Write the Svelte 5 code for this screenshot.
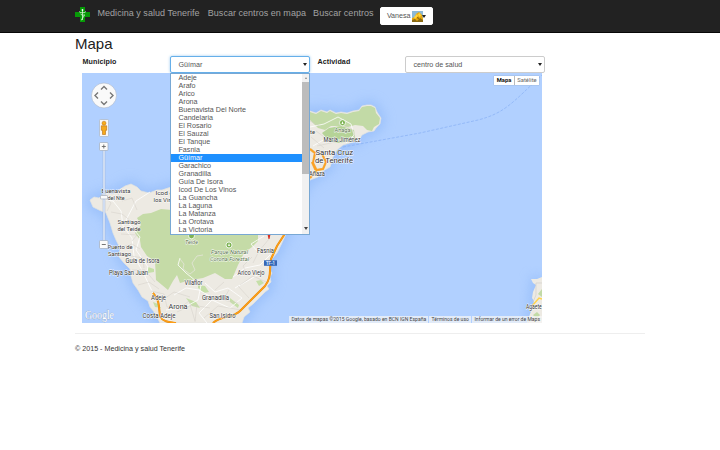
<script>
  const links = [
    { text: 'Medicina y salud Tenerife', width: 103 },
    { text: 'Buscar centros en mapa', width: 98 },
    { text: 'Buscar centros', width: 60 }
  ];
  const towns = ['Adeje', 'Arafo', 'Arico', 'Arona', 'Buenavista Del Norte', 'Candelaria', 'El Rosario', 'El Sauzal', 'El Tanque', 'Fasnia', 'Güímar', 'Garachico', 'Granadilla', 'Guía De Isora', 'Icod De Los Vinos', 'La Guancha', 'La Laguna', 'La Matanza', 'La Orotava', 'La Victoria'];
  const selected = 'Güímar';
  // label, x, baseline, width, size
  const places = [
    ['Buenavista', 101.5, 193, 29, 6.2], ['del Nte', 107.5, 199.5, 17, 6.2],
    ['Icod de', 155.5, 195, 21, 6.2], ['los Vinos', 153.5, 201.5, 25, 6.2],
    ['Santiago', 117.5, 224.2, 23, 6.2], ['del Teide', 117.5, 230.7, 23, 6.2],
    ['Puerto de', 107.5, 249.3, 25, 6.2], ['Santiago', 108, 255.7, 23, 6.2],
    ['Guía de Isora', 125.5, 263, 34, 6.5], ['Playa San Juan', 109, 275, 39, 6.5],
    ['Vilaflor', 184.5, 284.5, 18, 6.5], ['Adeje', 151, 299.8, 15, 6.5],
    ['Arona', 168.5, 309, 19, 7.4], ['Costa Adeje', 142.5, 318.3, 33, 6.5],
    ['Granadilla', 202, 299.7, 27, 6.8], ['San Isidro', 209.5, 317.7, 26, 6.6],
    ['Arico Viejo', 237.5, 274.7, 27, 6.5], ['Fasnia', 257, 252.5, 17, 6.5],
    ['María Jiménez', 323.5, 141.7, 37, 6.5], ['Añaza', 309, 175.5, 16, 6.5],
    ['Santa Cruz', 315.5, 155.1, 37.5, 8], ['de Tenerife', 315, 163, 38, 8],
    ['Tegueste', 291, 134, 24, 6.2], ['Agaete', 526, 308.7, 15.7, 6.4]
  ];
</script>

<div class="page">
  <header>
    <nav class="container">
      <svg class="logo" width="15" height="15" viewBox="0 0 15 15">
        <path d="M5 0h5v5h5v5h-5v5H5v-5H0V5h5z" fill="#079a07" />
        <path d="M7.500 3v10M4 4.500q2 2 3.500 1 1.500 1 3.500-1M5.500 7q2 2 3.500 1t-1 2.500-1 2" fill="none" stroke="#d5f5d5" stroke-width=".8" />
        <circle cx="7.500" cy="3" r=".9" fill="#fff" />
      </svg>
      {#each links as link}
        <a href="#top" style:width="{link.width}px">{link.text}</a>
      {/each}
      <button class="user">
        <span>Vanesa</span>
        <svg width="11" height="11" viewBox="0 0 11 11">
          <rect width="11" height="11" fill="#8cb9d8" />
          <path d="M0 11V7l3-1 1-3 3-2 3 3 1 4v3z" fill="#e8a90e" />
          <path d="M2 6l3-3 1 2-3 3zm4-3 2-1 1 3-2 1z" fill="#ffd43d" />
          <path d="M0 9l3-1 2 2 3-3 3 2v2H0z" fill="#8a6a14" />
          <path d="M5 6l2 1-1 1zM1 8l2-1" fill="#553d0c" />
        </svg>
        <i class="caret"></i>
      </button>
    </nav>
  </header>

  <main class="container">
    <h1>Mapa</h1>
    <div class="filters">
      <b class="first">Municipio</b>
      <div class="select active">
        <span>{selected}</span><i class="caret"></i>
        <div class="menu">
          <ul>
            {#each towns as town}
              <li class:current={town === selected}>{town}</li>
            {/each}
          </ul>
          <div class="scroll"><i class="up"></i><div class="thumb"></div><i class="down"></i></div>
        </div>
      </div>
      <b class="second">Actividad</b>
      <div class="select"><span>centro de salud</span><i class="caret"></i></div>
    </div>

    <div class="map">
      <svg class="canvas" width="460" height="250" viewBox="82 73 460 250">
        <defs>
          <filter id="shore" x="-20%" y="-20%" width="140%" height="140%"><feGaussianBlur stdDeviation="6" /></filter>
          <path id="island" d="M90 200L94 197 99 198 103 194 107 193 113 194 119 190 125 186 131 184 137 187 141 191 149 193 157 190 162 190 180 184 220 170 265 130 300 112 310 111 316 113 321 110 327 112 330 110 336 113 341 112 347 113 353 111 359 110 362 106 367 105 371 105 375 107 377 112 381 118 380 124 376 128 374 131 368 132 362 135 359 140 353 142 343 145 337 150 333 157 330 167 323 171 318 177 310 180 296 205 286 234 281 245 277 253 272 259 270 263 269 269 272 273 270 277 271 282 267 286 269 289 265 292 259 298 253 304 248 308 250 312 244 317 242 323 160 323 155 313 150 307 148 301 142 297 138 290 133 283 131 276 130 269 124 263 119 257 120 248 116 240 113 233 110 223 106 213 99 210 93 207z" />
        </defs>
        <rect x="82" y="73" width="460" height="251" fill="#b1d0ff" />
        <use href="#island" fill="#8eb8f8" stroke="#8eb8f8" stroke-width="8" opacity=".65" filter="url(#shore)" />
        <path d="M543 276h-12l-3 35-5 14h20z" fill="#8eb8f8" opacity=".65" filter="url(#shore)" />
        <path d="M343 147L420 133 478 120C505 113 512 103 542 75" fill="none" stroke="#87aff3" stroke-width=".7" stroke-dasharray="3 1.500" />
        <use href="#island" fill="#edeae3" stroke="#e3e4df" stroke-width=".7" />
        <path d="M172 210L161 209 151 213 143 214 137 218 141 225 135 233 140 240 141 247 147 256 155 261 156 280 168 290 173 281 177 275 180 283 191 280 203 278 215 273 225 279 232 279 238 265 244 253 252 247 258 241 258 210z" fill="#c5dba7" />
        <path d="M310 112L316 114 321 111 327 113 330 111 336 114 341 113 347 114 353 112 359 111 362 107 367 106 371 106 375 108 376 113 380 118 379 124 374 127 372 131 367 130 363 126 355 125 348 127 340 126 331 126 325 130 318 128 310 120z" fill="#c2daa6" />
        <path d="M322 133l7-5 12-2 13 4 1 9-8 3-10 1-8-2z" fill="#b5d397" />
        <path d="M198 285l7 1 4 6-5 1-6-5zM148 267l6 2 0 3-6 1zM256 281l5-1 3 3-5 3zM153 302l5 2 3 4-6-1zM186 298l10 4 4 6-8-2zM230 298l9 7-1 3-8-6z" fill="#c5dfa8" />
        <g fill="none" stroke="#fff" stroke-width=".8">
          <path d="M101 199l12 2 8 10 2 15 9 12 2 18 9 16 7 15 8 16M150 192l-14 9-10 19 14 17-4 13 12 17-2 9M180 258l-2 7 8 8 15 12-3 15-15 8-17 2M205 283l10 9 13-4 14 10-12 10-18-8-13 13 8 10M233 277l12-9 15-3 10-10M235 288l14-8 15-9M264 236l-13 8 7 8M310 127l14-3 14-7 13 7 3 11-8 8M313 146l12-7 15 1 14-3M174 295l12-7 13 2 14 8" />
          <path d="M180 259l4 5-1 5 7 5 5-4-3-7 5-7 6-1" stroke="#e4e5d9" />
        </g>
        <g fill="none" stroke="#cfccc5" stroke-width=".45">
          <path d="M101 194l10 9-4 8M116 190l6 11 10-3 5 12M111 212l11 2 9 7M121 234l16 1-5 6M122 247l10-3 8 5M125 255l18 3 1 10M132 270l13 0 10 12M138 285l11-3 10 7M151 291l13 3 3 13 13 1 9-7 6 20M161 301l13-9 16 5M177 312l15-7 18 3M197 304l-2 18M204 318l14-12 23 4M229 290l-6 10 15 3M224 282l-9 8M252 257l-9 9 3 6M240 285l13-9 13 6M249 298l-11-12M269 239l-10 12-6 12M310 121l11 6M311 137l13 11M316 131l15 11M338 123l14 6 4 12M317 146l18-4" />
        </g>
        <path d="M310 149l5 4-2 10 4 8M310 178l6-7-4-9M317 170l6-1 3-7-4-8" fill="none" stroke="#e8b75c" stroke-width="2.300" />
        <path d="M310 149l5 4-2 10 4 8M310 178l6-7-4-9M317 170l6-1 3-7-4-8" fill="none" stroke="#ffa021" stroke-width="1.400" />
        <path d="M153 293C160 300 159 309 160 317 164 322 169 322 176 323M213 323C221 315 233 318 240 311L253 298 265 286C272 277 269 270 271 259L277 246 286 232" fill="none" stroke="#df8a10" stroke-width="2" />
        <path d="M153 293C160 300 159 309 160 317 164 322 169 322 176 323M213 323C221 315 233 318 240 311L253 298 265 286C272 277 269 270 271 259L277 246 286 232" fill="none" stroke="#ff9e17" stroke-width="1.300" />
        <path d="M542 277l-5 2-6 0 2 4 3 2-3 7-1 6 2 3-2 8-2 5-3 9h15z" fill="#edeae3" />
        <path d="M542 289l-4 5 4 3zM533 315l4-3 3 3-3 4z" fill="#c2daa6" />
        <path d="M542 283h-6v12l-3 7M527 324l6-7 9 2" fill="none" stroke="#d2d0ca" stroke-width=".7" />
        <path d="M532 306l7-8 3 1" fill="none" stroke="#ffd34c" stroke-width="1.500" />
        <g fill="#7eb454" stroke="#fff" stroke-width=".8">
          <circle cx="342.500" cy="122.700" r="3" /><circle cx="191.500" cy="235.800" r="3" /><circle cx="229" cy="245" r="3" />
        </g>
        <path d="M341.500 124l1-3 1 3zM228 246l1-3 1 3z" fill="#fff" />
        <path d="M267 232h4l-1.500 7h-1z" fill="#d93125" />
        <rect x="264" y="260.300" width="13" height="5.500" fill="#3567b5" />
        <text x="266" y="264.900" font-size="5" font-weight="bold" textLength="9" lengthAdjust="spacingAndGlyphs" fill="#dce8ff">TF-1</text>
        <g class="labels">
          {#each places as [name, x, y, width, size]}
            <text {x} {y} font-size={size} textLength={width} lengthAdjust="spacingAndGlyphs">{name}</text>
          {/each}
          <g class="park">
            <text x="211" y="254.300" textLength="37" lengthAdjust="spacingAndGlyphs">Parque Natural</text>
            <text x="210" y="260.700" textLength="39" lengthAdjust="spacingAndGlyphs">Corona Forestal</text>
            <text x="185" y="244" textLength="13" lengthAdjust="spacingAndGlyphs">Teide</text>
            <text x="334.500" y="132" textLength="16" lengthAdjust="spacingAndGlyphs" class="plain">Anaga</text>
          </g>
        </g>
        <text class="brand" x="85" y="319" font-size="11.500" textLength="29" lengthAdjust="spacingAndGlyphs">Google</text>

        <circle cx="104" cy="95.500" r="12.500" fill="#fafafa" stroke="#a9b6c9" stroke-width=".6" />
        <g fill="none" stroke="#777" stroke-width="1.400">
          <path d="M101 89.500l3-3 3 3M101 101.500l3 3 3-3M98 92.500l-3 3 3 3M110 92.500l3 3-3 3" />
        </g>
        <rect x="99.500" y="119.500" width="9" height="17" rx="1" fill="#f7f7f7" stroke="#abb5c3" stroke-width=".7" />
        <circle cx="104" cy="123.200" r="2" fill="#f8ad1b" stroke="#b96c0b" stroke-width=".5" />
        <path d="M101.300 125.800h5.400v4.500h-1.200v4.200h-3v-4.200h-1.200z" fill="#f5a91c" stroke="#b96c0b" stroke-width=".6" />
        <rect x="103" y="150" width="2" height="91" fill="#dce8fa" stroke="#8fa4c5" stroke-width=".35" />
        <g fill="#fafafa" stroke="#98a2b1" stroke-width=".6">
          <rect x="99.500" y="142.500" width="8.500" height="8" rx="1" /><rect x="99.500" y="240.500" width="8.500" height="8" rx="1" /><rect x="100.500" y="195.500" width="7" height="3.500" rx=".6" />
        </g>
        <path d="M101.800 146.500h4M103.800 144.500v4M101.800 244.500h4" stroke="#666" stroke-width=".9" />
      </svg>
      <div class="types"><b>Mapa</b><span>Satélite</span></div>
      <div class="terms">
        <span style:width="139px">Datos de mapas ©2015 Google, basado en BCN IGN España</span>
        <span style:width="42px">Términos de uso</span>
        <span style:width="70px">Informar de un error de Maps</span>
      </div>
    </div>
    <hr />
    <footer>© 2015 - Medicina y salud Tenerife</footer>
  </main>
</div>

<style>
  :global(body) { margin: 0; background: #fff; }
  .page { width: 720px; height: 450px; overflow: hidden; background: #fff; color: #333; font: 7.150px/8px "Liberation Sans", Arial, sans-serif; }
  .container { width: 570px; margin: 0 auto; box-sizing: border-box; }
  header { height: 33px; box-sizing: border-box; background: #222; border-bottom: 1px solid #080808; }
  nav { display: flex; align-items: flex-start; }
  .logo { margin: 7px 7.500px 0 0; flex: none; }
  nav a { flex: none; margin: 8px 7.300px 0 0; font-size: 9px; line-height: 10px; letter-spacing: .03px; color: #a2a2a2; text-decoration: none; white-space: nowrap; }
  .user { width: 53px; height: 18px; margin-top: 7px; padding: 0 0 0 5.500px; display: flex; align-items: center; border: 1px solid #fff; border-radius: 2px; background: #fff; color: #555; font: 7.150px/8px "Liberation Sans", Arial, sans-serif; box-sizing: border-box; }
  .user span { width: 25.500px; text-align: left; flex: none; }
  .user svg { flex: none; }
  .user .caret { margin-left: -1px; }
  .caret { width: 0; height: 0; border: 2px solid transparent; border-top: 3px solid #222; border-bottom: 0; flex: none; }
  h1 { margin: 0; padding-top: 2px; height: 22px; box-sizing: border-box; font-size: 15px; line-height: 17px; font-weight: 400; color: #222; }
  .filters { display: flex; height: 18px; padding-top: 1px; box-sizing: border-box; color: #222; }
  .filters b { padding-top: 2px; letter-spacing: .08px; box-sizing: border-box; }
  .first { width: 95px; padding-left: 7.500px; }
  .second { width: 95px; padding-left: 7.500px; }
  .select { position: relative; width: 140px; height: 17px; box-sizing: border-box; border: 1px solid #ccc; border-radius: 2px; display: flex; align-items: center; justify-content: space-between; padding: 0 2px 0 7.500px; background: #fff; color: #555; }
  .active { border-color: #66afe9; box-shadow: 0 0 3px #9bcaf0; }
  .menu { position: absolute; z-index: 2; top: 16px; left: -1px; width: 140px; height: 162px; border: 1px solid #78a8d4; box-sizing: border-box; background: #fff; display: flex; }
  ul { list-style: none; margin: 0; padding: 0; flex: 1; }
  li { height: 8px; line-height: 9px; padding-left: 7.500px; white-space: nowrap; }
  .current { background: #1e90ff; color: #fff; }
  .scroll { width: 7px; background: #f1f1f1; display: flex; flex-direction: column; align-items: center; }
  .thumb { width: 7px; height: 92px; margin: 3px 0 53px; background: #bcbcbc; }
  .up { margin-top: 3px; border: 1.500px solid transparent; border-bottom: 2px solid #888; border-top: 0; }
  .down { border: 2px solid transparent; border-top: 3px solid #444; border-bottom: 0; }
  .map { position: relative; width: 460px; height: 250px; margin-left: 7px; }
  .canvas { display: block; }
  .canvas text { font-family: Roboto, "Noto Sans", sans-serif; }
  .labels { fill: #333; stroke: #fff; stroke-width: .9px; paint-order: stroke; stroke-linejoin: round; }
  .park text { font-size: 6.200px; font-style: italic; fill: #557147; }
  .park .plain { font-style: normal; }
  .canvas .brand { font-family: "Liberation Serif", serif; fill: #fff; stroke: #8aa0bd; stroke-width: .5px; paint-order: stroke; }
  .types { position: absolute; right: 3px; top: 3px; height: 9px; display: flex; background: #fff; box-shadow: 0 0 1px #8292a8; font: 5.800px/9px Roboto, sans-serif; color: #666; text-align: center; }
  .types b { width: 20px; color: #111; border-right: 1px solid #bbb; }
  .types span { width: 24px; }
  .terms { position: absolute; right: 0; bottom: 0; height: 7px; display: flex; gap: 1px; font: 5.050px/7px Roboto, sans-serif; color: #444; white-space: nowrap; }
  .terms span { box-sizing: border-box; padding-left: 2.500px; background: #f5f5f5b8; }
  hr { margin: 10px 0 0; border: 0; border-top: 1px solid #eee; }
  footer { margin-top: 11px; color: #333; }
</style>
